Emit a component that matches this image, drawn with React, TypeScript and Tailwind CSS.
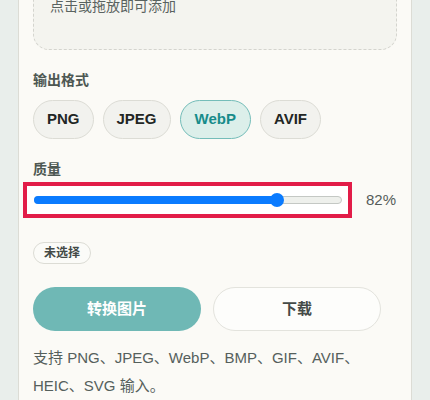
import React from "react";

const formats = ["PNG", "JPEG", "WebP", "AVIF"];

export default function App() {
  return (
    <div
      className="min-h-[400px] h-[400px] overflow-hidden bg-[#e9eeeb]"
      style={{ fontFamily: '"Liberation Sans", "Noto Sans CJK SC", sans-serif' }}
    >
      <div className="ml-[18px] mt-[-70px] w-[394px] rounded-[20px] border border-[#dcdcd5] bg-[#fbfaf6] px-[14px] pt-[14px] pb-6">
        <div className="flex h-[105px] flex-col rounded-2xl border border-dashed border-[#d4d4ce] bg-[#f4f4ef] px-[16px] pt-[50px]">
          <p className="text-[14px] leading-5 text-[#5a6360]">点击或拖放即可添加</p>
        </div>

        <div className="mt-5 text-[14px] font-bold leading-5 text-[#4d5752]">输出格式</div>
        <div className="mt-[10px] flex gap-[9px]">
          {formats.map((f) => {
            const active = f === "WebP";
            return (
              <div
                key={f}
                className={
                  active
                    ? "flex h-[39px] items-center rounded-full border border-[#74bdb9] bg-[#dcefea] px-[14px] text-[15px] font-bold text-[#178c8a]"
                    : "flex h-[39px] items-center rounded-full border border-[#dcdcd5] bg-[#f2f2ee] px-[13px] text-[15px] font-bold text-[#222624]"
                }
              >
                {f}
              </div>
            );
          })}
        </div>

        <div className="mt-5 text-[14px] font-bold leading-5 text-[#4d5752]">质量</div>
        <div className="mt-[3px] flex items-center">
          <div className="-ml-[10px] flex h-[36px] w-[329px] items-center border-4 border-[#e21c48] bg-white pl-[7px] pr-[6px]">
            <div className="relative h-[8px] flex-1 rounded-full border border-[#c4c8c4] bg-[#eef0ec]">
              <div className="absolute -left-px -top-px h-[8px] w-[243px] rounded-full bg-[#0a7bff]" />
              <div className="absolute left-[235px] top-[-4px] h-[14px] w-[14px] rounded-full bg-[#0a7bff]" />
            </div>
          </div>
          <span className="ml-[14px] text-[15px] text-[#555c59]">82%</span>
        </div>

        <div className="mt-[24px] flex">
          <span className="flex h-[22px] items-center rounded-full border border-[#dcdcd5] bg-[#fbfbf8] px-[10px] text-[12px] font-bold text-[#444a47]">
            未选择
          </span>
        </div>

        <div className="mt-[23px] flex gap-[12px]">
          <button className="h-[44px] w-[168px] rounded-full bg-[#6fb8b5] text-[15px] font-bold text-white">
            转换图片
          </button>
          <button className="h-[44px] w-[168px] rounded-full border border-[#e3e3dd] bg-[#fdfdfb] text-[15px] font-bold text-[#444a47]">
            下载
          </button>
        </div>

        <p className="mt-[13px] text-[15px] leading-[28px] text-[#55605c]">
          支持 PNG、JPEG、WebP、BMP、GIF、AVIF、HEIC、SVG 输入。
        </p>
      </div>
    </div>
  );
}
